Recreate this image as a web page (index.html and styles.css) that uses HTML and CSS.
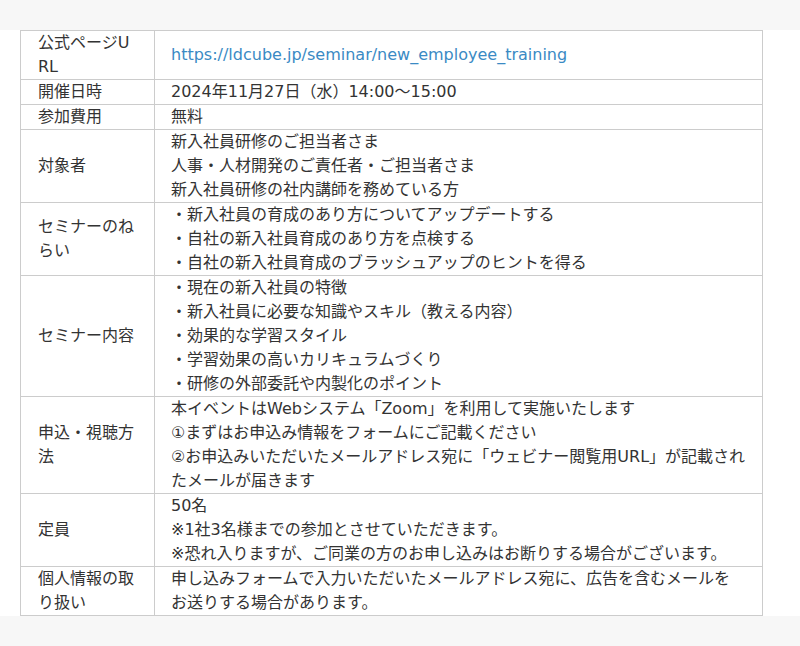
FILE: index.html
```html
<!DOCTYPE html>
<html lang="ja">
<head>
<meta charset="utf-8">
<link rel="stylesheet" href="styles.css">
</head>
<body>
<div class="topbar"></div>
<main class="content">
<table class="info">
<colgroup><col class="c1"><col class="c2"></colgroup>
<tr><th>公式ページURL</th><td><a href="#">https://ldcube.jp/seminar/new_employee_training</a></td></tr>
<tr><th>開催日時</th><td>2024年11月27日（水）14:00～15:00</td></tr>
<tr><th>参加費用</th><td>無料</td></tr>
<tr><th>対象者</th><td>新入社員研修のご担当者さま<br>人事・人材開発のご責任者・ご担当者さま<br>新入社員研修の社内講師を務めている方</td></tr>
<tr><th>セミナーのねらい</th><td>・新入社員の育成のあり方についてアップデートする<br>・自社の新入社員育成のあり方を点検する<br>・自社の新入社員育成のブラッシュアップのヒントを得る</td></tr>
<tr><th>セミナー内容</th><td>・現在の新入社員の特徴<br>・新入社員に必要な知識やスキル（教える内容）<br>・効果的な学習スタイル<br>・学習効果の高いカリキュラムづくり<br>・研修の外部委託や内製化のポイント</td></tr>
<tr><th>申込・視聴方法</th><td>本イベントはWebシステム「Zoom」を利用して実施いたします<br>①まずはお申込み情報をフォームにご記載ください<br>②お申込みいただいたメールアドレス宛に「ウェビナー閲覧用URL」が記載されたメールが届きます</td></tr>
<tr><th>定員</th><td>50名<br>※1社3名様までの参加とさせていただきます。<br>※恐れ入りますが、ご同業の方のお申し込みはお断りする場合がございます。</td></tr>
<tr><th>個人情報の取り扱い</th><td>申し込みフォームで入力いただいたメールアドレス宛に、広告を含むメールをお送りする場合があります。</td></tr>
</table>
</main>
<div class="bottombar"></div>
</body>
</html>
```

FILE: styles.css
```css
html, body {
  margin: 0;
  padding: 0;
  background: #ffffff;
}
body {
  font-family: "DejaVu Sans", "Noto Sans CJK JP", sans-serif;
  font-size: 16px;
  line-height: 24px;
  color: #333333;
}
.topbar {
  height: 30px;
  background: #f7f7f7;
}
.content {
  padding: 0 0 0 20px;
}
.info {
  width: 743px;
  border-collapse: collapse;
  table-layout: fixed;
  word-break: break-all;
}
.info .c1 {
  width: 134px;
}
.info th,
.info td {
  border: 1px solid #cccccc;
  padding: 0 16px 0 16px;
  text-align: left;
  font-weight: normal;
  vertical-align: middle;
}
.info th {
  padding-left: 17px;
}
.info a {
  color: #3a8ac4;
  text-decoration: none;
}
.bottombar {
  height: 31px;
  background: #f7f7f7;
}
```
